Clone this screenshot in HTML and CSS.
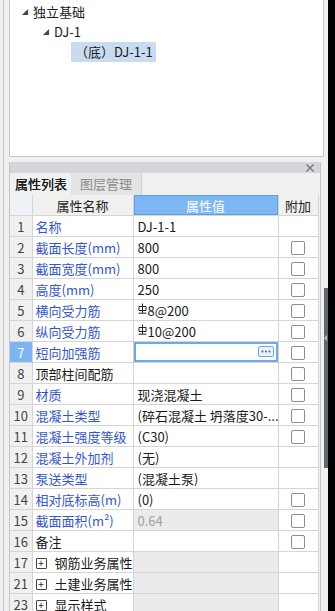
FILE: index.html
```html
<!DOCTYPE html>
<html lang="zh-CN">
<head>
  <meta charset="UTF-8">
  <title>属性列表</title>
  <link rel="stylesheet" href="styles.css">
</head>
<body>

<div class="shell">
  <div class="main">

    <!-- 构件树 -->
    <div class="tree-panel">
      <div class="node lv1"><span class="tri">◢</span>独立基础</div>
      <div class="node lv2"><span class="tri">◢</span>DJ-1</div>
      <div class="node lv3"><span class="sel">（底）DJ-1-1</span></div>
    </div>

    <!-- 属性面板 -->
    <div class="prop-panel">
      <div class="dock-bar"><span class="close">×</span></div>
      <div class="tabs">
        <div class="tab active">属性列表</div>
        <div class="tab">图层管理</div>
      </div>

      <table class="grid">
        <colgroup>
          <col class="c-num"><col class="c-name"><col class="c-val"><col class="c-add">
        </colgroup>
        <thead>
          <tr>
            <th class="h-num"></th>
            <th>属性名称</th>
            <th class="h-val">属性值</th>
            <th>附加</th>
          </tr>
        </thead>
        <tbody id="rows"></tbody>
      </table>
    </div>

    <div class="splitter"><span class="arrow"></span></div>
  </div>
  <div class="edge"></div>
</div>

<script>
  // 属性数据: [序号, 名称, 值, 蓝色名称, 附加框, 类型]
  const REBAR = '<svg class="rebar" width="9" height="11" viewBox="0 0 9 11"><path d="M4.5 0.5V10M1 3.5h7v4H1zM0.5 10.2h8" fill="none" stroke="#222" stroke-width="1"/></svg>';
  const MORE = '<span class="more"><svg width="10" height="3" viewBox="0 0 10 3"><circle cx="1.5" cy="1.5" r="1" fill="#3a6fb5"/><circle cx="5" cy="1.5" r="1" fill="#3a6fb5"/><circle cx="8.5" cy="1.5" r="1" fill="#3a6fb5"/></svg></span>';
  const rows = [
    [1, "名称", "DJ-1-1", true, false],
    [2, "截面长度(mm)", "800", true, true],
    [3, "截面宽度(mm)", "800", true, true],
    [4, "高度(mm)", "250", true, true],
    [5, "横向受力筋", REBAR + "8@200", true, true],
    [6, "纵向受力筋", REBAR + "10@200", true, true],
    [7, "短向加强筋", "", true, true, "edit"],
    [8, "顶部柱间配筋", "", false, true],
    [9, "材质", "现浇混凝土", true, true],
    [10, "混凝土类型", "(碎石混凝土 坍落度30-...", true, true],
    [11, "混凝土强度等级", "(C30)", true, true],
    [12, "混凝土外加剂", "(无)", true, false],
    [13, "泵送类型", "(混凝土泵)", true, false],
    [14, "相对底标高(m)", "(0)", true, true],
    [15, "截面面积(m²)", "0.64", true, true, "ro"],
    [16, "备注", "", false, true],
    [17, "钢筋业务属性", "", false, false, "group"],
    [21, "土建业务属性", "", false, false, "group"],
    [23, "显示样式", "", false, false, "group"]
  ];

  const tbody = document.getElementById("rows");
  rows.forEach(([no, name, val, blue, box, kind]) => {
    const tr = document.createElement("tr");
    let nameHtml = name;
    if (kind === "group") nameHtml = '<span class="plus">+</span>' + name;
    let valHtml = val;
    let valClass = "val";
    if (kind === "edit") {
      valClass += " editing";
      valHtml = MORE;
    }
    if (kind === "ro" || kind === "group") valClass += " ro";
    tr.innerHTML =
      `<td class="num${kind === "edit" ? " cur" : ""}">${no}</td>` +
      `<td class="name${blue ? " blue" : ""}">${nameHtml}</td>` +
      `<td class="${valClass}">${valHtml}</td>` +
      `<td class="add">${box ? '<span class="check"></span>' : ""}</td>`;
    tbody.appendChild(tr);
  });
</script>

</body>
</html>
```

FILE: styles.css
```css
html, body {
  margin: 0;
  height: 611px;
  overflow: hidden;
}
body {
  background-color: #f0f0f0;
  font-family: "Noto Sans CJK SC", "Noto Sans", sans-serif;
  font-size: 13px;
  color: #1a1a1a;
}
.shell {
  display: flex;
  height: 611px;
}
.main {
  position: relative;
  width: 321px;
  margin-left: 3px;
  border-left: 1px solid #c9c9c9;
  padding-left: 5px;
  box-sizing: border-box;
}
.edge {
  flex: 1;
  margin-left: 4px;
  background-color: #000;
}

/* 构件树 */
.tree-panel {
  height: 157px;
  background-color: #fff;
  border: 1px solid #c6c6c6;
  border-top: none;
  box-sizing: border-box;
  padding-top: 2px;
}
.node {
  height: 20px;
  line-height: 20px;
  display: flex;
  align-items: center;
  white-space: nowrap;
}
.tri {
  font-size: 6px;
  color: #444;
  width: 11px;
}
.lv1 { padding-left: 12px; }
.lv2 { padding-left: 33px; }
.lv3 { padding-left: 61px; }
.sel {
  background-color: #c9dbf1;
  padding: 0 4px;
  height: 20px;
  width: 77px;
}

/* 属性面板 */
.prop-panel {
  margin-top: 5px;
  width: 312px;
  border-left: 1px solid #c6c6c6;
  border-right: 1px solid #c6c6c6;
  box-sizing: border-box;
  height: 460px;
}
.dock-bar {
  height: 11px;
  background-color: #d5d6da;
  display: flex;
  justify-content: flex-end;
  align-items: center;
  padding-right: 4px;
}
.close {
  font-size: 12px;
  line-height: 11px;
  color: #777;
  font-weight: bold;
}
.tabs {
  display: flex;
  height: 22px;
  background-color: #f0f0f0;
}
.tab {
  padding: 0 9px;
  line-height: 22px;
  font-size: 13px;
  white-space: nowrap;
  color: #8c8c8c;
  background-color: #e4e4e4;
  border-right: 1px solid #d0d0d0;
}
.tab.active {
  padding: 0 4px 0 5px;
  color: #1a1a1a;
  background-color: #f0f0f0;
  border-right: none;
  text-shadow: 0 0 0.3px #1a1a1a;
}

.grid {
  border-collapse: collapse;
  table-layout: fixed;
  width: 308px;
  background-color: #fff;
}
.c-num { width: 22px; }
.c-name { width: 101px; }
.c-val { width: 145px; }
.c-add { width: 40px; }
.grid th,
.grid td {
  border: 1px solid #d5d5d5;
  height: 20px;
  padding: 0;
  white-space: nowrap;
  overflow: hidden;
  line-height: 19px;
}
.grid tr:first-child td { border-top: none; }
.grid th {
  font-weight: normal;
  background-color: #f0f0f0;
  color: #222;
  text-align: center;
  border-top: none;
}
.grid th:first-child,
.grid td:first-child { border-left: none; }
.grid th.h-num { background-color: #eef1f5; }
.grid th.h-val {
  background-color: #7db8f5;
  color: #fff;
  box-shadow: inset 0 0 0 1px #5e9fe6;
}
.num {
  background-color: #f0f0f0;
  text-align: center;
  color: #444;
  font-size: 13px;
}
.num.cur {
  background-color: #7ab6f3;
  color: #fff;
}
.name { padding-left: 3px !important; color: #1a1a1a; }
.name.blue { color: #3455d1; }
.val { padding-left: 4px !important; color: #1a1a1a; position: relative; }
.val.ro { background-color: #ebebeb; color: #a0a0a0; }
.val.editing {
  box-shadow: inset 0 0 0 2px #6fa8e6;
}
.more {
  position: absolute;
  right: 4px;
  top: 4px;
  width: 14px;
  height: 9px;
  border: 1px solid #6fa8e6;
  border-radius: 2px;
  background-color: #e9f1fb;
  display: flex;
  align-items: center;
  justify-content: center;
}
.rebar {
  vertical-align: 2px;
  margin-right: 1px;
}
.add { text-align: center; }
.check {
  display: inline-block;
  width: 12px;
  height: 12px;
  border: 1px solid #8d8d8d;
  border-radius: 2px;
  vertical-align: -2px;
  background-color: #fff;
}
.plus {
  display: inline-block;
  width: 9px;
  height: 9px;
  border: 1px solid #444;
  border-radius: 1px;
  font-size: 10px;
  line-height: 8px;
  text-align: center;
  margin-right: 8px;
  vertical-align: 1px;
}

.splitter {
  position: absolute;
  right: -4px;
  top: 288px;
  width: 4px;
  height: 180px;
  background-color: #5f666e;
}
.arrow {
  position: absolute;
  top: 47px;
  left: 0;
  border-top: 3px solid transparent;
  border-bottom: 3px solid transparent;
  border-right: 3px solid #b8bcc2;
}
```
